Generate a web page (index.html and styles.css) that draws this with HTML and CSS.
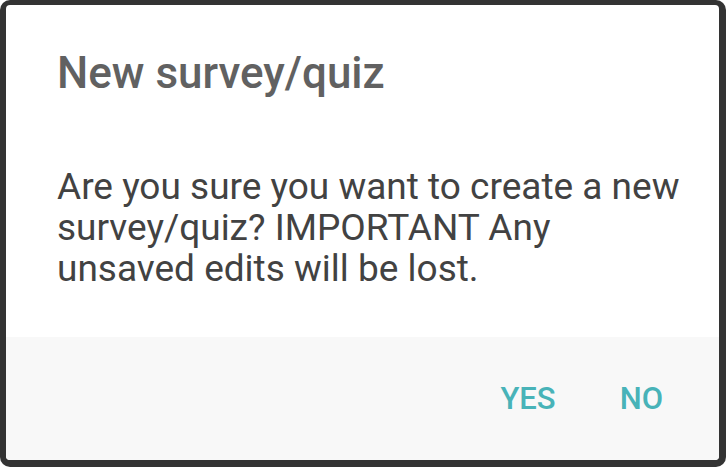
FILE: index.html
```html
<!DOCTYPE html>
<html lang="en">
<head>
  <meta charset="UTF-8">
  <meta name="viewport" content="width=device-width, initial-scale=1.0">
  <title>New survey/quiz</title>
  <link rel="stylesheet" href="styles.css">
</head>
<body>
  <div class="frame">
    <div class="dialog">
      <div class="dialog-content">
        <h1 class="dialog-title">New survey/quiz</h1>
        <p class="dialog-text">Are you sure you want to create a new<br>survey/quiz? IMPORTANT Any<br>unsaved edits will be lost.</p>
      </div>
      <div class="dialog-actions">
        <button class="action">YES</button>
        <button class="action">NO</button>
      </div>
    </div>
  </div>
</body>
</html>
```

FILE: styles.css
```css
html, body {
  margin: 0;
  padding: 0;
  background: #fff;
}
body {
  font-family: Roboto, "Noto Sans", Arial, sans-serif;
}
.frame {
  box-sizing: border-box;
  width: 726px;
  height: 467px;
  background: #333;
  border-radius: 10px;
  padding: 5px 7px 7px 6px;
}
.dialog {
  height: 100%;
  background: #fff;
  border-radius: 4px;
  overflow: hidden;
  display: flex;
  flex-direction: column;
}
.dialog-content {
  padding: 42px 0 0 51px;
  height: 332px;
  box-sizing: border-box;
  white-space: nowrap;
}
.dialog-title {
  margin: 0;
  font-size: 44px;
  line-height: 52px;
  font-weight: 500;
  color: #616161;
}
.dialog-text {
  margin: 67px 0 0;
  font-size: 37px;
  line-height: 41px;
  color: #424242;
}
.dialog-actions {
  flex: 1;
  background: #f8f8f8;
  display: flex;
  justify-content: flex-end;
  align-items: center;
  gap: 64px;
  padding-right: 56px;
}
.action {
  background: none;
  border: none;
  padding: 0;
  font-family: inherit;
  font-size: 31px;
  font-weight: 500;
  color: #48b3b8;
  cursor: pointer;
}
```
